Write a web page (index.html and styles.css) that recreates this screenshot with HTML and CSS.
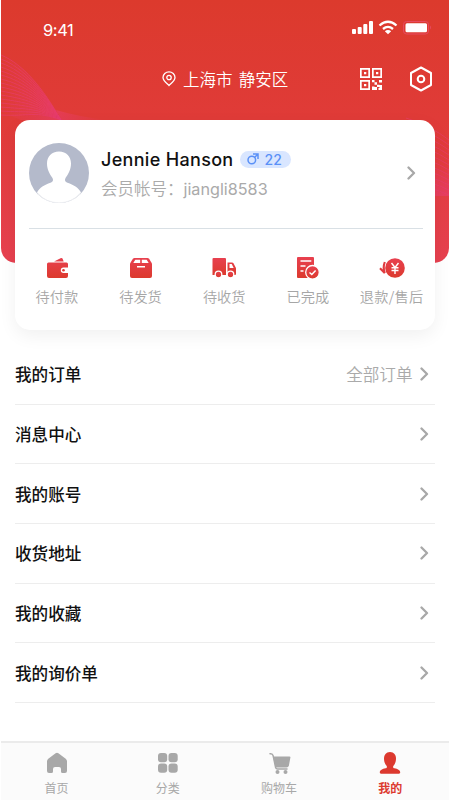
FILE: index.html
```html
<!DOCTYPE html>
<html lang="zh-CN">
<head>
<meta charset="utf-8">
<title>我的</title>
<link rel="stylesheet" href="styles.css">
</head>
<body>
<svg class="defs" width="0" height="0" aria-hidden="true">
  <defs>
    <linearGradient id="red" x1="0" y1="0" x2="0" y2="1"><stop offset="0" stop-color="#e8404f"/><stop offset="1" stop-color="#dc3a2e"/></linearGradient>
    <linearGradient id="fan" x1="0" y1="0" x2="1" y2="0"><stop offset="0" stop-color="#e83e68" stop-opacity="0"/><stop offset=".6" stop-color="#e83e68" stop-opacity=".4"/><stop offset="1" stop-color="#e83e68" stop-opacity=".7"/></linearGradient>
    <linearGradient id="tail" x1="0" y1="0" x2="1" y2="0"><stop offset="0" stop-color="#e83e68" stop-opacity=".6"/><stop offset="1" stop-color="#e83e68" stop-opacity="0"/></linearGradient>
    <linearGradient id="band" x1="0" y1="0" x2="0" y2="1"><stop offset="0" stop-color="#e83e70" stop-opacity="0"/><stop offset="1" stop-color="#e83e70" stop-opacity=".6"/></linearGradient>
    <symbol id="chev" viewBox="0 0 9 14"><path d="M1.500 1.500 7 7l-5.500 5.500" fill="none" stroke="#a8a8a8" stroke-width="2.300" stroke-linecap="round" stroke-linejoin="round"/></symbol>
  </defs>
</svg>
<div class="screen">
  <header class="hero">
    <svg class="waves" viewBox="0 0 448 263" id="waves" fill="none" stroke-width="1">
      <path d="M0 55C22 64 42 88 60 120H20L0 112z" fill="url(#fan)"/>
      <path d="M55 110Q75 116 105 120H60z" fill="url(#tail)"/>
      <path d="M415 165h33v31h-33z" fill="url(#band)"/>
    </svg>
    <div class="status">
      <span class="time">9:41</span>
      <svg width="80" height="16" viewBox="0 0 80 16" fill="#fff">
        <rect x="0" y="9" width="4" height="5" rx="1"/><rect x="5.700" y="7" width="4" height="7" rx="1"/><rect x="11.300" y="4" width="4" height="10" rx="1"/><rect x="17" y="1" width="4" height="13" rx="1"/>
        <path d="M27.500 5.500Q36 -2 44.500 5.500M31 9Q36 4.800 41 9" fill="none" stroke="#fff" stroke-width="2.300"/><path d="M32.800 11.300q3.200-2.400 6.400 0L36 14.300z"/>
        <rect x="51.500" y="1.500" width="25" height="12.500" rx="3" fill="none" stroke="#e64a60"/><rect x="53.500" y="3.200" width="21.500" height="9" rx="1.500"/><path d="M78 5.500q2 2 0 4z" fill="#e64a60"/>
      </svg>
    </div>
    <div class="topbar">
      <div class="place">
        <svg width="14" height="16" viewBox="0 0 14 16" fill="none" stroke="#fff" stroke-width="1.300"><path d="M7 14.500C4.800 12.300 1 9.800 1 6.500a6 5.700 0 0 1 12 0c0 3.300-3.800 5.800-6 8z"/><circle cx="7" cy="6.500" r="2.200"/></svg>
        <span>上海市 静安区</span>
      </div>
      <svg class="qr" width="22" height="22" viewBox="0 0 22 22" fill="#fff"><path d="M0 0h10v10H0zM1.700 1.700v6.600h6.600V1.700zM12 0h10v10H12zM13.700 1.700v6.600h6.600V1.700zM0 12h10v10H0zM1.700 13.700v6.600h6.600v-6.600z" fill-rule="evenodd"/><path d="M4 4h2.300v2.300H4zM16 4h2.300v2.300H16zM4 16h2.300v2.300H4zM12 12h2.500v2.300H12zM14.500 14.300H17v2.400h-2.500zM19 12h3v2.500h-3zM17 16.700h2.500V19H17zM12 18.500h2.500V22H12zM14.500 19H17v3h-2.500zM19.500 17H22v5h-3.500v-2h1z"/></svg>
      <svg class="gear" width="24" height="26" viewBox="0 0 24 26" fill="none" stroke="#fff" stroke-width="2" stroke-linejoin="round"><path d="M12 1.500 22 7v12l-10 5.500L2 19V7z"/><circle cx="12" cy="13" r="3.300"/></svg>
    </div>
  </header>

  <section class="card">
    <div class="profile">
      <svg class="avatar" width="60" height="60" viewBox="0 0 60 60"><clipPath id="face"><circle cx="30" cy="30" r="30"/></clipPath><circle cx="30" cy="30" r="30" fill="#b4bacb"/><path clip-path="url(#face)" fill="#fff" d="M30 8.500c7.500 0 12 5 12 12 0 6-2.700 10.500-5.500 14.500-1.200 2.500-.3 4 2 4.800 6 2 11 5 13.500 9.700A30 30 0 0 1 30 60 30 30 0 0 1 8 49.500c2.500-4.700 7.500-7.700 13.500-9.700 2.300-.8 3.200-2.300 2-4.800C20.700 31 18 26.500 18 20.500c0-7 4.500-12 12-12z"/><path d="M8.500 50.500a29.500 29.500 0 0 0 43 0" fill="none" stroke="#eff0f3"/></svg>
      <div class="who">
        <div class="name"><b>Jennie Hanson</b><span class="tag"><svg width="12" height="12" viewBox="0 0 12 12" fill="none" stroke="#5b91f7" stroke-width="1.500"><circle cx="4.800" cy="7" r="3.800"/><path d="M7.500 4.500 11 1M6 1h5v5"/></svg>22</span></div>
        <div class="account">会员帐号：<span>jiangli8583</span></div>
      </div>
      <svg class="chev" width="9" height="14"><use href="#chev"/></svg>
    </div>
    <nav class="orders">
      <a><svg width="26" height="24" viewBox="0 0 26 24"><path fill="url(#red)" d="M10 5.500 17 2q1-.3 1.500.6l1.200 2.900zM4.500 6.500h18q1.500 0 1.500 1.500v3.500h-4.500a2.700 2.700 0 0 0 0 5.400H24V20q0 2-2 2H5q-2 0-2-2V8q0-1.500 1.500-1.500z"/><circle cx="19.500" cy="14.200" r="1.300" fill="#df3b38"/></svg><span>待付款</span></a>
      <a><svg width="26" height="24" viewBox="0 0 26 24"><path fill="url(#red)" d="M6.500 2h13q1 0 1.600.8L24 7.500V20q0 2-2 2H4q-2 0-2-2V7.500l2.900-4.700Q5.500 2 6.500 2z"/><path d="M7.300 3.700h4.900V7H5.300zM13.800 3.700h4.900l2 3.300h-6.900zM9 10h8v1.500H9z" fill="#fff"/></svg><span>待发货</span></a>
      <a><svg width="26" height="24" viewBox="0 0 26 24"><path fill="url(#red)" d="M2.500 2H14q1 0 1 1v16H1.500V3q0-1 1-1zM16.500 6.500H21q1 0 1.500.8l2.200 4.200q.3.500.3 1.200V18q0 1-1 1h-7.500z"/><path d="M18.500 8h2.200l2 4h-4.200z" fill="#fff"/><g fill="url(#red)" stroke="#fff" stroke-width="1.300"><circle cx="7.500" cy="18.500" r="3.300"/><circle cx="19.500" cy="18.500" r="3.300"/></g></svg><span>待收货</span></a>
      <a><svg width="26" height="24" viewBox="0 0 26 24"><path fill="url(#red)" d="M3 1h15q1 0 1 1v20H3q-1 0-1-1V2q0-1 1-1z"/><path d="M5.500 5h10.800M5.500 10h5M5.500 15h3" stroke="#fff" stroke-width="1.500"/><circle cx="17.500" cy="16.300" r="6.800" fill="url(#red)" stroke="#fff" stroke-width="1.300"/><path d="m14.500 16.500 2.300 2 3.800-4" fill="none" stroke="#fff" stroke-width="1.500"/></svg><span>已完成</span></a>
      <a><svg width="26" height="24" viewBox="0 0 26 24"><circle cx="16" cy="12" r="9.800" fill="url(#red)"/><path d="m12.500 7 3.500 4.500L19.500 7M12.500 11.700h7M12.500 14.500h7M16 11.500V18" fill="none" stroke="#fff" stroke-width="1.400"/><path d="M5.800 6Q3.700 11.500 5.700 17L1 12.300" fill="none" stroke="#e03b40" stroke-width="2.100"/></svg><span class="wide">退款/售后</span></a>
    </nav>
  </section>

  <ul class="menu">
    <li><span>我的订单</span><em>全部订单</em><svg width="9" height="14"><use href="#chev"/></svg></li>
    <li><span>消息中心</span><svg width="9" height="14"><use href="#chev"/></svg></li>
    <li><span>我的账号</span><svg width="9" height="14"><use href="#chev"/></svg></li>
    <li><span>收货地址</span><svg width="9" height="14"><use href="#chev"/></svg></li>
    <li><span>我的收藏</span><svg width="9" height="14"><use href="#chev"/></svg></li>
    <li><span>我的询价单</span><svg width="9" height="14"><use href="#chev"/></svg></li>
  </ul>

  <nav class="tabs">
    <a><svg width="22" height="22" viewBox="0 0 22 22" fill="#a8a8a8"><path d="M9.600 1.200q1.400-1 2.800 0l7.300 5.500Q21 7.700 21 9.300V19q0 2-2 2h-2.500q-1.500 0-1.500-1.500V17q0-2-2-2H9q-2 0-2 2v2.500Q7 21 5.500 21H3q-2 0-2-2V9.300q0-1.600 1.300-2.600z"/></svg><span>首页</span></a>
    <a><svg width="22" height="22" viewBox="0 0 22 22" fill="#a8a8a8"><rect x="1" y="1" width="9.200" height="9.200" rx="3"/><rect x="11.500" y="1" width="9.200" height="9.200" rx="3"/><rect x="1" y="11.500" width="9.200" height="9.200" rx="3"/><rect x="11.500" y="11.500" width="9.200" height="9.200" rx="3"/></svg><span>分类</span></a>
    <a><svg class="cart" width="24" height="22" viewBox="0 0 24 22" fill="#a8a8a8"><path d="M3 1.700q2.600-.4 3.100 2l2.600 12q.4 1.200 1.800 1.200H20" fill="none" stroke="#a8a8a8" stroke-width="1.500" stroke-linecap="round"/><path d="M6 4.500h16.500q1 0 .9 1l-1.500 8q-.4 2-2.400 2H8.500z"/><circle cx="10.500" cy="20" r="2"/><circle cx="18.500" cy="20" r="2"/></svg><span>购物车</span></a>
    <a class="on"><svg width="22" height="22" viewBox="0 0 22 22" fill="#dc392f"><path d="M11 0c4 0 6 3 6 6.500 0 3-1 5.800-2.700 7.500-.6 1.500.2 2 1.200 2.300 3 .8 5.700 1.500 5.700 4.200 0 .7-.5 1.200-1.200 1.200H2c-.7 0-1.200-.5-1.200-1.200 0-2.700 2.700-3.400 5.700-4.200 1-.3 1.800-.8 1.200-2.300C6 12.300 5 9.500 5 6.500 5 3 7 0 11 0z"/></svg><span>我的</span></a>
  </nav>
</div>
<script src="waves.js"></script>
</body>
</html>
```
FILE: styles.css
```css
* { box-sizing: border-box; }
body { margin: 0; background: #fff; font-family: "Liberation Sans", "Noto Sans CJK SC", sans-serif; }
svg { display: block; flex: none; }
.defs { position: absolute; }
.screen { width: 450px; height: 800px; padding: 0 1px; display: flex; flex-direction: column; overflow: hidden; }
.hero { position: relative; height: 263px; margin-bottom: -143px; flex: none; border-radius: 0 0 15px 15px; overflow: hidden; background: linear-gradient(#dc3a2d, #e03b38 45%, #e74150); color: #fff; }
.waves { position: absolute; inset: 0; width: 448px; height: 263px; }
.status { position: relative; display: flex; justify-content: space-between; height: 60px; padding: 20px 17px 0 42px; }
.time { font: 16.5px/20px Inter, sans-serif; letter-spacing: -.4px; }
.topbar { position: relative; display: flex; align-items: center; height: 38px; padding-left: 161px; }
.place { display: flex; align-items: center; gap: 7px; width: 198px; font: 350 16.500px/24px "Noto Sans CJK SC", sans-serif; word-spacing: 2.500px; white-space: nowrap; }
.gear { margin-left: 27px; }
.card { position: relative; width: 419.500px; height: 210px; margin: 0 0 0 14px; flex: none; border-radius: 15px; background: #fff; box-shadow: 0 6px 18px rgba(0,0,0,.06); }
.profile { display: flex; height: 109px; margin: 0 12px 0 14px; border-bottom: 1px solid #d9e0e5; padding-top: 23px; }
.who { margin-left: 12px; flex: 1; }
.name { display: flex; align-items: center; height: 32px; }
.name b { font: 500 18px/24px Inter, sans-serif; letter-spacing: .32px; color: #111; position: relative; top: 1px; }
.tag { display: flex; align-items: center; gap: 6px; height: 17px; width: 51px; margin-left: 6px; padding-left: 7px; border-radius: 9px; background: #d9e6ff; color: #5b91f7; font: 500 14px/17px Inter, sans-serif; }
.account { color: #aaa; font: 350 16.500px/26px "Noto Sans CJK SC", sans-serif; white-space: nowrap; }
.account span { font: 400 16.200px/26px Inter, sans-serif; }
.profile .chev { margin: 23px 7px 0 0; }
.orders { display: grid; grid-template-columns: repeat(5, 83.700px); padding-top: 27px; }
.orders a { display: flex; flex-direction: column; align-items: center; gap: 5px; color: #a6a6a6; font: 350 14.200px/22px "Noto Sans CJK SC", sans-serif; white-space: nowrap; }
.wide { letter-spacing: .3px; }
.menu { list-style: none; margin: 15px 0 0 14px; padding: 0; width: 419.500px; flex: 1; }
.menu li { display: flex; align-items: center; height: 59.700px; border-bottom: 1px solid #ededed; padding-right: 6px; font: 500 16.600px/24px "Noto Sans CJK SC", sans-serif; color: #111; }
.menu span { flex: 1; }
.menu em { font-style: normal; font-weight: 350; color: #aaa; margin-right: 7px; }
.tabs { display: grid; grid-template-columns: repeat(4, 111.200px); height: 59px; flex: none; border-top: 2px solid #ebebeb; background: #fbfbfb; padding-top: 9px; }
.tabs a { display: flex; flex-direction: column; align-items: center; gap: 5px; color: #a8a8a8; font: 400 12px/18px "Noto Sans CJK SC", sans-serif; }
.tabs .on { color: #dc392f; font-weight: 700; }
```
FILE: waves.js
```js
// Fan of thin lines on each side of the header.
const waves = document.getElementById("waves");
const line = (d) => {
  const p = document.createElementNS("http://www.w3.org/2000/svg", "path");
  p.setAttribute("d", d);
  p.setAttribute("stroke", "#e83e70");
  p.setAttribute("stroke-opacity", ".6");
  waves.appendChild(p);
};
for (let i = 0; i < 16; i++) {
  const y = 55 + i * 4;
  line(`M0 ${y}C${22 + i * 0.4} ${y + 9 - i * 0.5} ${42 - i * 0.5} ${88 + i * 1.5} 60 120`);
}
for (let i = 0; i < 12; i++) {
  line(`M405 ${118 + i * 6}Q430 ${126 + i * 5.5} 448 ${140 + i * 5}`);
}
```
